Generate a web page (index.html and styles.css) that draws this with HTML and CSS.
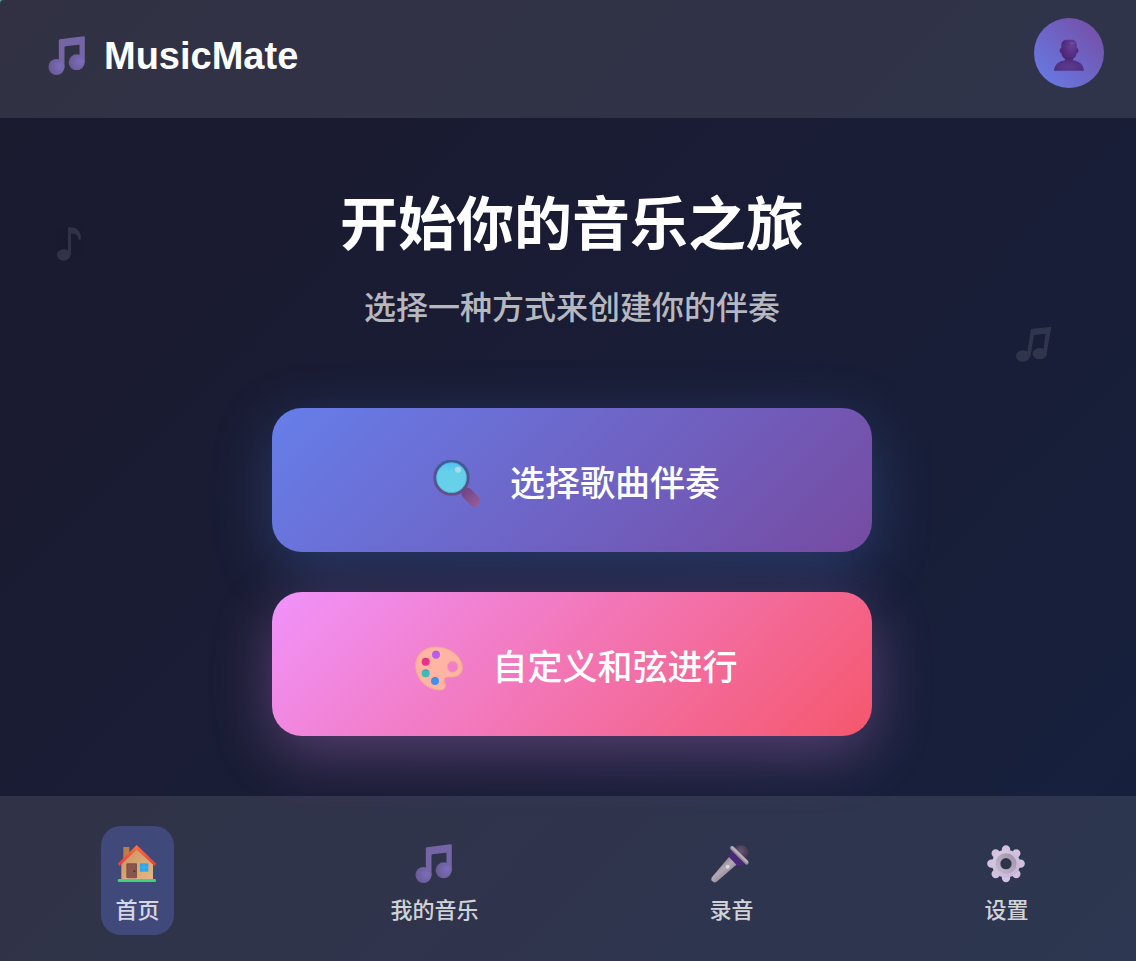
FILE: index.html
```
<!DOCTYPE html>
<html lang="zh-CN">
<head>
<meta charset="utf-8">
<meta name="viewport" content="width=device-width, initial-scale=1">
<title>MusicMate</title>
<link rel="stylesheet" href="styles.css">
</head>
<body>
<svg class="defs" aria-hidden="true">
  <defs>
    <radialGradient id="ball" cx="0.72" cy="0.45" r="0.65"><stop offset="0" stop-color="#7c6dbc"/><stop offset="1" stop-color="#6b5c98"/></radialGradient>
    <symbol id="note" viewBox="134 71 117 120">
      <path fill="#7565a6" d="M168 84q0-3 4-3l70-9q4 0 4 3v76h-16V98q0-2-3-1l-39 5q-3 1-3 4v60h-17z"/>
      <circle cx="161" cy="164" r="24" fill="url(#ball)"/>
      <circle cx="221.500" cy="150" r="24" fill="url(#ball)"/>
    </symbol>
  </defs>
</svg>
<div class="app">
  <header class="header">
    <div class="logo">
      <span class="logo-icon"><svg class="icon" aria-hidden="true"><use href="#note"/></svg></span>
      <span class="logo-text">MusicMate</span>
    </div>
    <button class="avatar" type="button" aria-label="个人中心">
      <svg class="avatar-icon" viewBox="129 118 96 96" aria-hidden="true">
        <defs>
          <radialGradient id="head" cx=".68" cy=".3" r=".8"><stop offset="0" stop-color="#67409a"/><stop offset=".7" stop-color="#512b7c"/><stop offset="1" stop-color="#4b2473"/></radialGradient>
          <radialGradient id="torso" cx=".5" cy=".7" r=".6"><stop offset="0" stop-color="#5d3c91"/><stop offset="1" stop-color="#4e2c7b"/></radialGradient>
        </defs>
        <path fill="url(#torso)" d="M132 213c2-19 15-29 33-31v-7h24v7c18 2 31 12 33 31z"/>
        <ellipse cx="153" cy="153" rx="4" ry="7" fill="#4c2575"/>
        <ellipse cx="201" cy="153" rx="4" ry="7" fill="#4c2575"/>
        <path fill="url(#head)" d="M154 136c0-11 8-16 17-16h13c10 0 16 6 16 16v22c0 14-10 23-23 23s-23-9-23-23z"/>
        <ellipse cx="187" cy="131" rx="9" ry="4" fill="#7452a6" opacity=".6"/>
      </svg>
    </button>
  </header>

  <main class="main">
    <svg class="float-note float-left" viewBox="51 48 75 106" aria-hidden="true">
      <ellipse cx="71" cy="134" rx="20" ry="17"/><path d="M84 51h7q30-2 32 34q-1 5-8 2q1-17-22-18v65h-9z"/>
    </svg>
    <svg class="float-note float-right" viewBox="46 48 108 108" aria-hidden="true">
      <ellipse cx="67" cy="138" rx="21" ry="17"/><ellipse cx="117" cy="131" rx="21" ry="17"/><path d="M91 57l61-7-15 84h-11l9-63-35 4-11 65h-11z"/>
    </svg>

    <h1 class="title">开始你的音乐之旅</h1>
    <p class="subtitle">选择一种方式来创建你的伴奏</p>

    <div class="actions">
      <button class="action action-song" type="button">
        <span class="action-icon">
          <svg class="icon-large" viewBox="98 91 144 144" aria-hidden="true">
            <defs>
              <linearGradient id="ring" x1="0" y1="0" x2="0" y2="1"><stop offset="0" stop-color="#3f5d96"/><stop offset="1" stop-color="#6d4a88"/></linearGradient>
              <linearGradient id="glass" x1="0" y1="0" x2="0" y2="1"><stop offset="0" stop-color="#4ec1f0"/><stop offset=".3" stop-color="#66cfe9"/><stop offset="1" stop-color="#67d2ea"/></linearGradient>
              <linearGradient id="grip" x1="0" y1="0" x2="1" y2="0"><stop offset="0" stop-color="#6f4484"/><stop offset="1" stop-color="#965c98"/></linearGradient>
            </defs>
            <rect x="180" y="186" width="64" height="34" rx="14" transform="rotate(46 212 203)" fill="url(#grip)"/>
            <circle cx="153.500" cy="144" r="50" fill="url(#glass)" stroke="url(#ring)" stroke-width="9"/>
            <circle cx="153.500" cy="144" r="45" fill="none" stroke="#3aa7e0" stroke-width="2" opacity=".7"/>
            <circle cx="173" cy="120" r="9" fill="#acd8f2"/>
          </svg>
        </span>
        <span class="action-label">选择歌曲伴奏</span>
      </button>
      <button class="action action-chord" type="button">
        <span class="action-icon">
          <svg class="icon-large" viewBox="45 73 144 144" aria-hidden="true">
            <path fill="#ffb4a4" stroke="#f5a98c" stroke-width="3" fill-rule="evenodd" d="M110 82C71 81 46 106 47 140c1 39 32 68 69 71 16 1 23-7 19-19-6-15 0-21 13-20 24 2 40-9 39-29-2-33-36-60-77-61zM158 124a16 17 0 1 1 0 34a16 17 0 1 1 0-34z"/>
            <circle cx="108" cy="105" r="12" fill="#b95ee9"/>
            <circle cx="77" cy="126" r="12" fill="#ef2f8a"/>
            <circle cx="77" cy="161" r="12" fill="#3db8bd"/>
            <circle cx="105" cy="184" r="12" fill="#3f93ef"/>
            <path d="M70 119a10 10 0 0 1 13-1M101 98a10 10 0 0 1 13-1M70 154a10 10 0 0 1 13-1M98 177a10 10 0 0 1 13-1" fill="none" stroke="#79579b" stroke-width="3" opacity=".4"/>
          </svg>
        </span>
        <span class="action-label">自定义和弦进行</span>
      </button>
    </div>
  </main>

  <nav class="nav">
    <a class="nav-item active" href="#home" aria-current="page">
      <svg class="icon" viewBox="86 162 120 120" aria-hidden="true">
        <defs>
          <linearGradient id="wall" x1="0" y1="0" x2="1" y2="1"><stop offset="0" stop-color="#cc9061"/><stop offset=".6" stop-color="#dba976"/><stop offset="1" stop-color="#e4b887"/></linearGradient>
          <linearGradient id="roof" x1="0" y1="0" x2="0" y2="1"><stop offset="0" stop-color="#ff7040"/><stop offset="1" stop-color="#e03d3b"/></linearGradient>
        </defs>
        <path fill="#b77f50" d="M105 171h18v40h-18z"/>
        <path fill="url(#wall)" d="M99 219l46-43 49 43v50H99z"/>
        <path fill="url(#roof)" d="M145 165l59 56-5 7-54-49-51 49-6-7z"/>
        <path fill="#e1b99b" d="M111 263h38v6h-38z"/>
        <rect x="114" y="220" width="32" height="45" rx="3" fill="#815047"/>
        <rect x="118" y="224" width="24" height="40" fill="#87574e"/>
        <circle cx="138" cy="244" r="3" fill="#512f30"/>
        <rect x="155" y="220" width="25" height="25" fill="#26a7f3"/>
        <path d="M167 220v25M155 232h25" stroke="#48baff" stroke-width="2"/>
        <rect x="88" y="267" width="115" height="9" rx="4" fill="#42d17c"/>
      </svg>
      <span class="nav-label">首页</span>
    </a>
    <a class="nav-item" href="#music">
      <svg class="icon" aria-hidden="true"><use href="#note"/></svg>
      <span class="nav-label">我的音乐</span>
    </a>
    <a class="nav-item" href="#record">
      <svg class="icon" viewBox="89 71 120 120" aria-hidden="true">
        <defs>
          <linearGradient id="handle" x1=".2" y1=".2" x2=".7" y2=".8"><stop offset="0" stop-color="#7d7580"/><stop offset=".5" stop-color="#b3a9b5"/><stop offset="1" stop-color="#8b818f"/></linearGradient>
          <radialGradient id="mic" cx=".5" cy=".35" r=".6"><stop offset="0" stop-color="#695a70"/><stop offset="1" stop-color="#3a2c49"/></radialGradient>
        </defs>
        <circle cx="178" cy="100" r="25" fill="url(#mic)"/>
        <path fill="#4b2777" d="M150 91l40 39q-15 12-32 4l-15-17q-4-14 7-26z"/>
        <path fill="url(#handle)" d="M143 110l22 23-59 51q-7 5-13-1-6-5-1-13z"/>
        <path d="M152 83l44 44" stroke="#91899a" stroke-width="12" stroke-linecap="round"/>
        <path d="M153 81l44 43" stroke="#b8b0bc" stroke-width="7" stroke-linecap="round"/>
        <circle cx="139" cy="139" r="6" fill="#ddd5df"/>
      </svg>
      <span class="nav-label">录音</span>
    </a>
    <a class="nav-item" href="#settings">
      <svg class="icon" viewBox="77 71 120 120" aria-hidden="true">
        <defs>
          <linearGradient id="gear" x1="0" y1="0" x2="1" y2="1"><stop offset="0" stop-color="#dacce4"/><stop offset="1" stop-color="#c5b3d9"/></linearGradient>
          <linearGradient id="hub" x1="1" y1="0" x2="0" y2="1"><stop offset="0" stop-color="#a197a7"/><stop offset="1" stop-color="#c4b6d0"/></linearGradient>
        </defs>
        <g stroke="#d2c2df" stroke-width="25" stroke-linecap="round"><path d="M137 87v86M93 130h88M106 99l62 62M168 99l-62 62"/></g>
        <circle cx="137" cy="130" r="42" fill="url(#gear)"/>
        <circle cx="137" cy="130" r="24" fill="none" stroke="url(#hub)" stroke-width="15"/>
        <circle cx="137" cy="130" r="17" fill="#303449"/>
      </svg>
      <span class="nav-label">设置</span>
    </a>
  </nav>
</div>
</body>
</html>
```
FILE: styles.css
```
* {
  box-sizing: border-box;
}

html {
  background: #4a9c97;
}

body {
  margin: 0;
  overflow-x: hidden;
  font-family: "Liberation Sans", "Noto Sans CJK SC", sans-serif;
  font-weight: 500;
  color: #fff;
}

button {
  border: 0;
  padding: 0;
  font: inherit;
  color: inherit;
  cursor: pointer;
}

.defs {
  position: absolute;
  width: 0;
  height: 0;
}

/* The shell runs slightly past the right edge of the window. */
.app {
  display: flex;
  flex-direction: column;
  min-height: 100vh;
  margin-right: -8px;
  border-top-left-radius: 4px;
  overflow: hidden;
  background: linear-gradient(135deg, #1a1a2e 0%, #191d36 55%, #16213e 100%);
}

.header {
  display: flex;
  align-items: center;
  justify-content: space-between;
  padding: 18px 40px 30px;
  background: rgba(255, 255, 255, 0.1);
}

.logo {
  display: flex;
  align-items: center;
  gap: 10px;
  padding-top: 6px;
}

.logo-icon {
  display: flex;
  justify-content: center;
  width: 54px;
}

.logo-text {
  font-size: 38px;
  font-weight: 700;
  line-height: 44px;
}

.icon {
  display: block;
  width: 40px;
  height: 40px;
}

.avatar {
  display: flex;
  align-items: center;
  justify-content: center;
  width: 70px;
  height: 70px;
  padding-top: 4px;
  border-radius: 50%;
  background: linear-gradient(45deg, #667eea, #764ba2);
}

.avatar-icon {
  width: 32px;
  height: 32px;
}

.main {
  position: relative;
  flex: 1;
  display: flex;
  flex-direction: column;
  align-items: center;
  padding: 71px 40px 60px;
}

.float-note {
  position: absolute;
  fill: #fff;
  opacity: 0.1;
}

.float-left {
  top: 108px;
  left: 5%;
  width: 25px;
  height: 36px;
}

.float-right {
  top: 208px;
  right: 8%;
  width: 36px;
  height: 36px;
}

.title {
  margin: 0 0 23px;
  font-size: 58px;
  font-weight: 700;
  line-height: 72px;
}

.subtitle {
  margin: 0 0 76px;
  font-size: 32px;
  line-height: 48px;
  color: rgba(255, 255, 255, 0.7);
}

.actions {
  display: flex;
  flex-direction: column;
  gap: 40px;
  width: 100%;
  max-width: 600px;
}

.action {
  display: flex;
  align-items: center;
  justify-content: center;
  gap: 20px;
  min-height: 144px;
  padding-top: 8px;
  border-radius: 30px;
  font-size: 35px;
  line-height: 48px;
}

.action-song {
  background: linear-gradient(135deg, #667eea, #764ba2);
  box-shadow: 0 16px 60px rgba(79, 130, 230, 0.3);
}

.action-chord {
  background: linear-gradient(135deg, #f093fb, #f5576c);
  box-shadow: 0 16px 60px rgba(240, 147, 251, 0.3);
}

.action-icon {
  display: flex;
  justify-content: center;
  width: 66px;
}

.icon-large {
  width: 48px;
  height: 48px;
}

.nav {
  display: flex;
  justify-content: space-around;
  padding: 30px 0 26px;
  background: rgba(255, 255, 255, 0.1);
}

.nav-item {
  display: flex;
  flex-direction: column;
  align-items: center;
  gap: 14px;
  padding: 18px 14px 11px;
  border-radius: 20px;
  color: rgba(255, 255, 255, 0.8);
  text-decoration: none;
}

.nav-item.active {
  background: rgba(102, 126, 234, 0.3);
}

.nav-label {
  font-size: 22px;
  line-height: 26px;
}
```
